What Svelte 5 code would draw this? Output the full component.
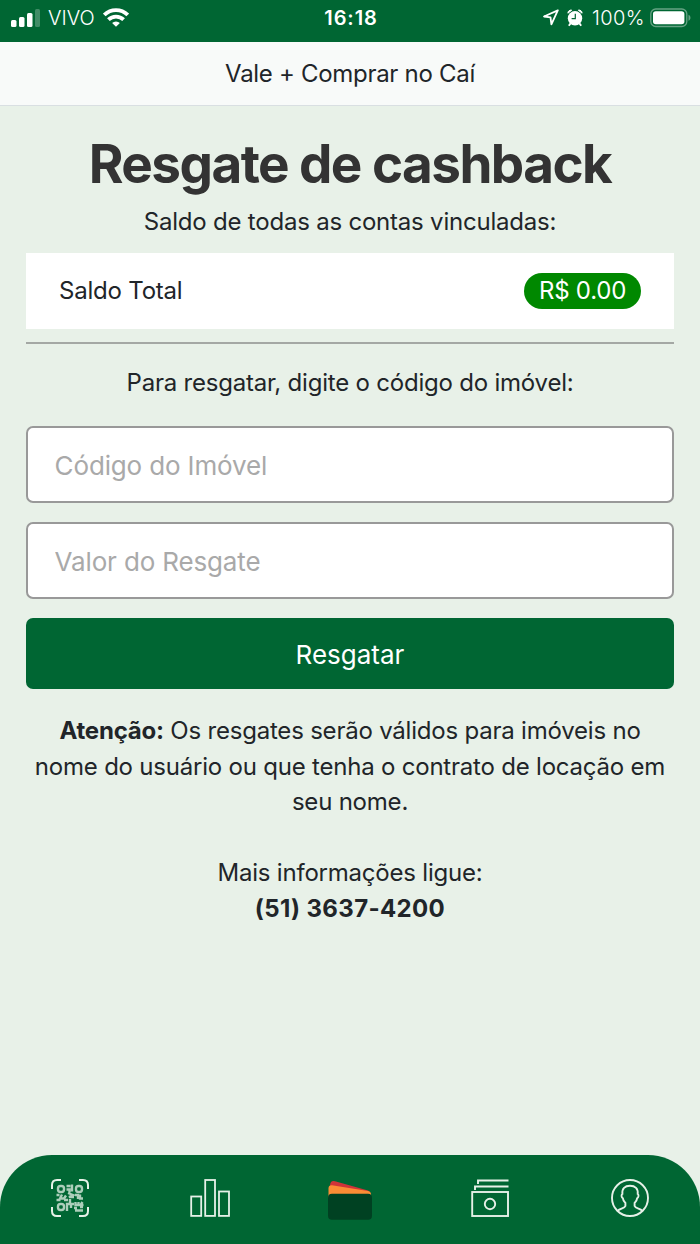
<script>
  let saldo = 0;
  let codigo = '';
  let valor = '';
  let telefone = '(51) 3637-4200';
</script>

<div class="app">
  <div class="status">
    <div class="side">
      <svg width="29" height="18" viewBox="0 0 29 18" fill="#fff">
        <rect x="0" y="11" width="5.5" height="7" rx="1.5" />
        <rect x="8" y="8" width="5.500" height="10" rx="1.5" />
        <rect x="16" y="4" width="5.500" height="14" rx="1.5" />
        <rect x="24" y="0" width="5" height="18" rx="1.500" opacity="0.25" />
      </svg>
      <span class="carrier">VIVO</span>
      <svg class="wifi" width="26" height="19" viewBox="0 0 26 19" fill="none" stroke="#fff" stroke-width="3.8">
        <path d="M1.300 7a16.600 16.600 0 0 1 23.400 0" />
        <path d="M5.400 11.700a10.800 10.800 0 0 1 15.200 0" />
        <path d="M13 18.700l-3.900-3.700a5.600 5.600 0 0 1 7.800 0z" fill="#fff" stroke="none" />
      </svg>
    </div>
    <strong class="clock">16:18</strong>
    <div class="side right">
      <svg width="16" height="17" viewBox="0 0 16 17" fill="none" stroke="#fff" stroke-width="1.8" stroke-linejoin="round">
        <path d="M14.800 1.400L1 7.500l6.500.900.900 7z" />
      </svg>
      <svg class="alarm" width="16" height="18" viewBox="0 0 16 18">
        <circle cx="8" cy="9.300" r="7.200" fill="#fff" />
        <path d="M.9 4.200a3 3 0 0 1 3.800-3zM15.100 4.200a3 3 0 0 0-3.800-3z" fill="#fff" stroke="#fff" stroke-width="1" />
        <path d="M3.400 14.600l-1.600 2.200M12.600 14.600l1.600 2.200" stroke="#fff" stroke-width="1.800" />
        <path d="M8.300 4.700v4.900H4.600" fill="none" stroke="#006633" stroke-width="1.200" />
      </svg>
      <span class="percent">100%</span>
      <svg class="battery" width="41" height="20" viewBox="0 0 41 20">
        <rect x=".8" y="1" width="36" height="17.500" rx="5" fill="none" stroke="#fff" stroke-opacity="0.4" stroke-width="1.300" />
        <rect x="3" y="3.300" width="31.400" height="13" rx="2.800" fill="#fff" />
        <path d="M38.500 6.800c2.600 1 2.600 5 0 6z" fill="#fff" fill-opacity="0.4" />
      </svg>
    </div>
  </div>

  <header>Vale + Comprar no Caí</header>

  <main>
    <h1>Resgate de cashback</h1>
    <p class="subtitle">Saldo de todas as contas vinculadas:</p>

    <div class="balance">
      <span>Saldo Total</span>
      <span class="badge">R$ {saldo.toFixed(2)}</span>
    </div>
    <hr />

    <p class="prompt">Para resgatar, digite o código do imóvel:</p>
    <input type="text" bind:value={codigo} placeholder="Código do Imóvel" />
    <input type="text" bind:value={valor} placeholder="Valor do Resgate" />
    <button>Resgatar</button>

    <p class="notice">
      <strong>Atenção:</strong> Os resgates serão válidos para imóveis no<br />
      nome do usuário ou que tenha o contrato de locação em<br />
      seu nome.
    </p>
    <p>Mais informações ligue:<br /><strong class="phone">{telefone}</strong></p>
  </main>

  <nav>
    <a href="#qrcode" aria-label="QR Code">
      <svg width="38" height="38" viewBox="0 0 38 38" fill="none" stroke="#e6f1e8">
        <path d="M1 10V6q0-5 5-5h4M28 1h4q5 0 5 5v4M37 28v4q0 5-5 5h-4M10 37H6q-5 0-5-5v-4" stroke-width="2" />
        <g stroke-width="2.4" opacity="0.75">
          <rect x="7" y="7" width="6" height="6" rx="2.500" />
          <rect x="25" y="7" width="6" height="6" rx="2.500" />
          <rect x="7" y="25" width="6" height="6" rx="2.500" />
          <path d="M15.500 7h4M21 5.500v7M15.500 10.500h3v3M17 14l5 2-4 2h5M5.500 16h3M11 15.500l-2 4h4l2-3M5.500 21h4M13 21h4M24 16h3v4M29 15.500v4h3M19 20v5h4M16 32v-7h4M20 29v-3M24.500 23v3h3v-3M31.500 23l-2 3h3M23 29h3M29 28h3M24 31.500h8" />
        </g>
      </svg>
    </a>
    <a href="#extrato" aria-label="Extrato">
      <svg width="40" height="38" viewBox="0 0 40 38" fill="none" stroke="#e6f1e8" stroke-width="1.8">
        <rect x="1.200" y="17.500" width="10" height="19.400" />
        <rect x="15.200" y="1" width="9.800" height="35.900" />
        <rect x="29" y="12.500" width="10" height="24.400" />
      </svg>
    </a>
    <a href="#carteira" aria-label="Carteira">
      <svg class="wallet" width="44" height="40" viewBox="0 0 44 40">
        <path d="M2 5.500Q2.500 0 7 1.300L40 10.400q2.500.800 2.500 3L38 18 2 10z" fill="#cf3339" />
        <path d="M.5 8.500Q.5 5 4 5.300l36 5.600q3 .7 3 3.600V20H.5z" fill="#fb8c35" />
        <rect x="0" y="13.800" width="44" height="26" rx="4" fill="#004122" />
      </svg>
    </a>
    <a href="#pagamentos" aria-label="Pagamentos">
      <svg width="38" height="38" viewBox="0 0 38 38" fill="none" stroke="#e6f1e8" stroke-width="1.9">
        <path d="M7 5V1.500h30.500M4 11V7.500h33.500" />
        <rect x="1.200" y="13" width="35.800" height="24" />
        <circle cx="19" cy="25" r="5.200" />
      </svg>
    </a>
    <a href="#perfil" aria-label="Perfil">
      <svg width="38" height="38" viewBox="0 0 38 38" fill="none" stroke="#e6f1e8" stroke-width="1.9">
        <circle cx="19" cy="19" r="18" />
        <path d="M6.700 31.800c2.800-2.300 6.800-2.300 7.700-4.800v-3c-1.700-1.500-2.300-3-2.500-4.700-1.800-1-1.600-3.800-.5-4.300C10.800 9.800 13.800 6.800 19 6.800s8.300 3 7.700 8.200c1.100.5 1.200 3.300-.6 4.300-.2 1.700-.8 3.200-2.500 4.700v3c.9 2.500 4.900 2.500 7.700 4.800" />
      </svg>
    </a>
  </nav>
</div>

<style>
  :global(body) {
    background: #e8f1e8;
  }

  .app {
    display: flex;
    flex-direction: column;
    height: 1244px;
    background: #e8f1e8;
    color: #212529;
    font-family: Inter, 'Liberation Sans', sans-serif;
    font-size: 24px;
    line-height: 35.5px;
    letter-spacing: -0.21px;
  }

  .status {
    display: flex;
    align-items: center;
    height: 42px;
    padding: 0 9px 7px 11px;
    box-sizing: border-box;
    background: #006633;
    color: #fff;
    font-size: 20px;
    line-height: 35px;
    letter-spacing: 0;
  }

  .status span,
  .clock {
    padding-top: 1px;
  }

  .side {
    display: flex;
    flex: 1;
    align-items: center;
  }

  .right {
    justify-content: flex-end;
  }

  .carrier {
    margin-left: 8px;
    font-weight: 300;
  }

  .wifi {
    margin-left: 8px;
  }

  .clock {
    font-weight: 600;
    letter-spacing: 0.9px;
  }

  .alarm {
    margin-left: 8px;
  }

  .percent {
    margin-left: 9px;
    font-weight: 300;
    letter-spacing: 0.4px;
  }

  .battery {
    margin-left: 5px;
  }

  header {
    height: 64px;
    box-sizing: border-box;
    padding-top: 14px;
    border-bottom: 1px solid #d9dfe2;
    background: #f8faf9;
    letter-spacing: -0.3px;
    text-align: center;
  }

  main {
    flex: 1;
    padding: 0 25.6px;
    text-align: center;
  }

  h1 {
    margin: 25px -10px 0;
    color: #333;
    font-size: 53px;
    font-weight: 700;
    line-height: 66px;
    letter-spacing: -1.55px;
  }

  p {
    margin: 0;
    white-space: nowrap;
  }

  .subtitle {
    margin-top: 7px;
  }

  .balance {
    display: flex;
    align-items: center;
    justify-content: space-between;
    height: 76px;
    margin-top: 13.5px;
    padding: 0 33.4px;
    box-sizing: border-box;
    background: #fff;
  }

  .badge {
    width: 117px;
    border-radius: 18px;
    background: #008800;
    color: #fff;
  }

  hr {
    height: 2px;
    margin: 12.5px 0 21px;
    border: 0;
    background: #a4a8a4;
  }

  .prompt {
    margin-bottom: 26px;
  }

  input {
    display: block;
    width: 100%;
    height: 77px;
    margin: 0 0 19px;
    padding: 1px 27px 0;
    box-sizing: border-box;
    border: 2px solid #999;
    border-radius: 7px;
    background: #fff;
    color: #212529;
    font: inherit;
    font-size: 26px;
    letter-spacing: -0.15px;
  }

  input::placeholder {
    color: #a9a9a9;
    opacity: 1;
  }

  button {
    display: block;
    width: 100%;
    height: 71px;
    padding: 2px 0 0;
    border: 0;
    border-radius: 7px;
    background: #006633;
    color: #fff;
    font: inherit;
    font-size: 26px;
    letter-spacing: 0;
  }

  .notice {
    margin: 24px -10px 35.5px;
  }

  .phone {
    letter-spacing: 0.35px;
  }

  nav {
    display: flex;
    height: 89px;
    padding-bottom: 3px;
    box-sizing: border-box;
    border-radius: 52px 52px 0 0;
    background: #006633;
  }

  nav a {
    display: flex;
    flex: 1;
    align-items: center;
    justify-content: center;
  }

  .wallet {
    margin-top: 3px;
  }
</style>
